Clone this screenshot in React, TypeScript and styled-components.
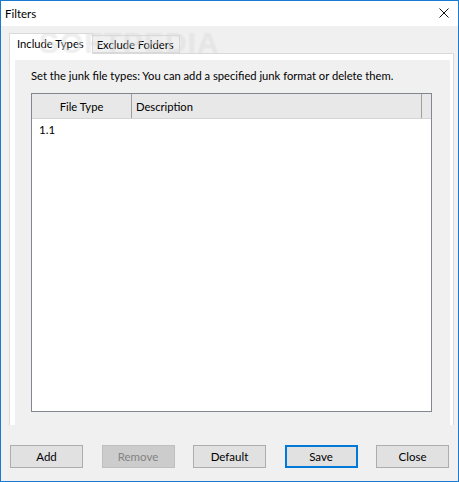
import styled, { createGlobalStyle } from 'styled-components'

const GlobalStyle = createGlobalStyle`
	html, body {
		margin: 0;
		padding: 0;
		background: #ffffff;
	}
	* {
		box-sizing: border-box;
	}
`

const uiFont = `'Lato', 'Noto Sans', sans-serif`

const buttons = [
	{ label: 'Add' },
	{ label: 'Remove', disabled: true },
	{ label: 'Default' },
	{ label: 'Save', isDefault: true },
	{ label: 'Close' },
]

export default function App() {
	return (
		<>
			<GlobalStyle />
			<Window>
				<TitleBar>
					<Title>Filters</Title>
					<CloseIcon viewBox="0 0 10 10">
						<path d="M0.5 0.5 L9.5 9.5 M9.5 0.5 L0.5 9.5" />
					</CloseIcon>
				</TitleBar>
				<Body>
					<Watermark>SOFTPEDIA</Watermark>
					<TabStrip>
						<Tab active>Include Types</Tab>
						<Tab>Exclude Folders</Tab>
					</TabStrip>
					<TabPage>
						<InnerPanel>
							<Hint>Set the junk file types: You can add a specified junk format or delete them.</Hint>
							<ListView>
								<HeaderRow>
									<HeaderCell width={100} center>File Type</HeaderCell>
									<HeaderCell width={290}>Description</HeaderCell>
									<HeaderFiller />
								</HeaderRow>
								<Row>
									<Cell>1.1</Cell>
								</Row>
							</ListView>
						</InnerPanel>
					</TabPage>
					<ButtonRow>
						{buttons.map((b) => (
							<DialogButton key={b.label} disabled={b.disabled} isDefault={b.isDefault}>
								{b.label}
							</DialogButton>
						))}
					</ButtonRow>
				</Body>
			</Window>
		</>
	)
}

const Window = styled.div`
	width: 459px;
	height: 482px;
	border: 1px solid #1979d3;
	display: flex;
	flex-direction: column;
	font-family: ${uiFont};
	font-size: 11.2px;
	color: #000;
	overflow: hidden;
`

const TitleBar = styled.div`
	height: 25px;
	background: #ffffff;
	display: flex;
	align-items: center;
	justify-content: space-between;
	padding: 0 9px 1px 4px;
`

const Title = styled.span`
	font-size: 11.5px;
`

const CloseIcon = styled.svg`
	width: 10px;
	height: 10px;
	fill: none;
	stroke: #111;
	stroke-width: 1;
`

const Body = styled.div`
	position: relative;
	flex: 1;
	min-height: 0;
	background: #f0f0f0;
	display: flex;
	flex-direction: column;
	padding: 7px 4px 0 8px;
`

const Watermark = styled.div`
	position: absolute;
	z-index: 2;
	left: 38px;
	top: 0px;
	font-family: 'Liberation Sans', sans-serif;
	font-weight: bold;
	font-size: 30px;
	letter-spacing: 1px;
	color: rgba(255, 255, 255, 0.4);
	text-shadow: 0 0 1px rgba(0, 0, 0, 0.1);
	pointer-events: none;
`

const TabStrip = styled.div`
	display: flex;
	align-items: flex-end;
	height: 21px;
	position: relative;
	z-index: 1;
	margin-bottom: -1px;
`

const Tab = styled.div<{ active?: boolean }>`
	height: ${({ active }) => (active ? '21px' : '18px')};
	padding: ${({ active }) => (active ? '0 8px 2px 7px' : '0 5px 0 4px')};
	margin-bottom: ${({ active }) => (active ? '0' : '1px')};
	display: flex;
	align-items: center;
	background: ${({ active }) => (active ? '#ffffff' : '#f0f0f0')};
	border: 1px solid #d9d9d9;
	border-bottom: ${({ active }) => (active ? 'none' : '1px solid #d9d9d9')};
	border-left: ${({ active }) => (active ? '1px solid #d9d9d9' : 'none')};
	white-space: nowrap;
`

const TabPage = styled.div`
	height: 372px;
	background: #ffffff;
	border: 1px solid #d9d9d9;
	border-bottom: none;
	padding: 6px 3px 0 5px;
	display: flex;
`

const InnerPanel = styled.div`
	flex: 1;
	min-width: 0;
	background: #f0f0f0;
	display: flex;
	flex-direction: column;
	padding: 8px 18px 13px 16px;
`

const Hint = styled.div`
	height: 25px;
	line-height: 16px;
	white-space: nowrap;
`

const ListView = styled.div`
	flex: 1;
	background: #ffffff;
	border: 1px solid #828790;
	display: flex;
	flex-direction: column;
`

const HeaderRow = styled.div`
	height: 25px;
	display: flex;
	background: #e8e8e8;
	border-bottom: 1px solid #d5d5d5;
`

const HeaderCell = styled.div<{ width: number; center?: boolean }>`
	width: ${({ width }) => width}px;
	display: flex;
	align-items: center;
	justify-content: ${({ center }) => (center ? 'center' : 'flex-start')};
	padding-left: ${({ center }) => (center ? '0' : '4px')};
	border-right: 1px solid #a0a0a0;
`

const HeaderFiller = styled.div`
	flex: 1;
`

const Row = styled.div`
	height: 18px;
	display: flex;
	align-items: center;
	padding-left: 7px;
	margin-top: 1px;
`

const Cell = styled.span`
	font-size: 11.5px;
`

const ButtonRow = styled.div`
	display: flex;
	justify-content: space-between;
	padding: 20px 5px 0 1px;
`

const DialogButton = styled.button<{ isDefault?: boolean }>`
	width: 73px;
	height: 23px;
	font-family: ${uiFont};
	font-size: 11.5px;
	color: #000;
	background: #e1e1e1;
	border: ${({ isDefault }) => (isDefault ? '2px solid #0078d7' : '1px solid #adadad')};
	padding: 0;

	&:disabled {
		background: #cccccc;
		border-color: #bfbfbf;
		color: #838383;
	}
`
